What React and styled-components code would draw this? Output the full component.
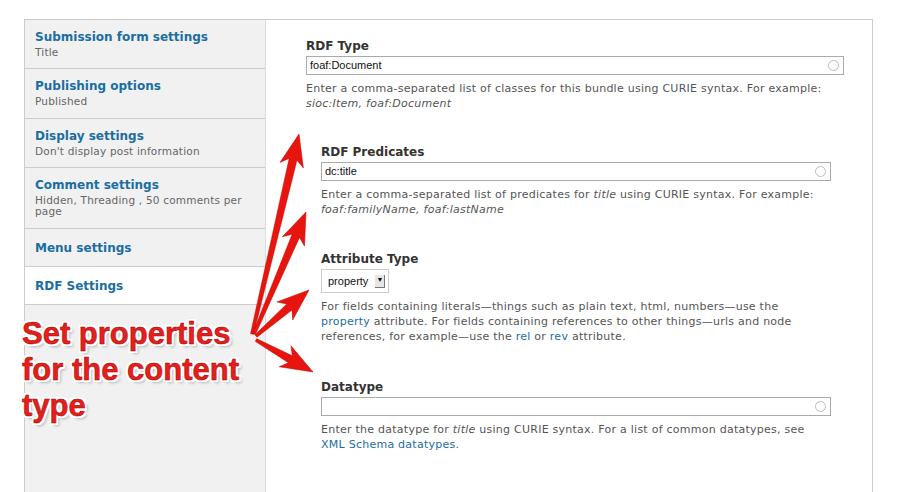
import React from 'react'
import styled, { createGlobalStyle } from 'styled-components'

const Global = createGlobalStyle`
  html, body { margin: 0; background: #fff; }
  body { font-family: "DejaVu Sans", Verdana, sans-serif; color: #333; }
`

const Page = styled.div`
  position: relative;
  width: 902px;
  height: 492px;
  overflow: hidden;
  padding: 19px 0 0 24px;
  box-sizing: border-box;
`

const Frame = styled.div`
  display: flex;
  width: 849px;
  height: 490px;
  border: 1px solid #ccc;
  box-sizing: border-box;
`

const Sidebar = styled.div`
  width: 240px;
  background: #f1f1f1;
  border-right: 1px solid #ddd;
`

const Tab = styled.div`
  height: ${p => p.h}px;
  box-sizing: border-box;
  padding: 10px 10px 0 10px;
  border-bottom: 1px solid #ccc;
  background: ${p => (p.active ? '#fff' : 'transparent')};
  ${p => p.center && 'display:flex;align-items:center;padding-top:0;'}
`

const TabTitle = styled.div`
  font-weight: bold;
  font-size: 12px;
  color: #1a6ea3;
`

const TabSub = styled.div`
  font-size: 10.5px;
  color: #666;
  line-height: 11px;
  margin-top: 3px;
  letter-spacing: 0.2px;
`

const Main = styled.div`
  flex: 1;
  padding: 19px 28px 0 40px;
`

const Field = styled.div`
  margin-left: ${p => p.indent || 0}px;
  margin-right: ${p => (p.indent ? 13 : 0)}px;
  margin-bottom: ${p => p.mb}px;
`

const Label = styled.div`
  font-weight: bold;
  font-size: 12px;
  color: #333;
  margin-bottom: 3px;
`

const Input = styled.div`
  position: relative;
  height: 19px;
  border: 1px solid #aaa;
  box-sizing: border-box;
  font-family: "Liberation Sans", Arial, sans-serif;
  font-size: 11px;
  line-height: 17px;
  padding-left: 3px;
  color: #111;
  &::after {
    content: '';
    position: absolute;
    right: 4px;
    top: 3px;
    width: 9px;
    height: 9px;
    border: 1px solid #bbb;
    border-radius: 50%;
  }
`

const Select = styled.div`
  display: inline-flex;
  align-items: center;
  gap: 7px;
  height: 22px;
  border: 1px solid #ccc;
  padding: 0 3px 0 6px;
  font-family: "Liberation Sans", Arial, sans-serif;
  font-size: 11px;
  color: #111;
`

const SelBtn = styled.span`
  width: 9px;
  height: 12px;
  background: #e6e6e6;
  border-right: 1px solid #777;
  border-bottom: 1px solid #777;
  font-size: 7px;
  line-height: 10px;
  text-align: center;
`

const Desc = styled.div`
  margin-top: 6px;
  font-size: 11px;
  letter-spacing: 0.25px;
  line-height: 15px;
  color: #555;
  a { color: #1a6ea3; text-decoration: none; }
`

const Callout = styled.div`
  position: absolute;
  left: 22px;
  top: 316px;
  font-family: "Liberation Sans", Arial, sans-serif;
  font-weight: bold;
  font-size: 31px;
  line-height: 36px;
  color: #e3201b;
  -webkit-text-stroke: 0.5px #a00;
  text-shadow: 2px 2px 0 #fff, -2px -2px 0 #fff, 2px -2px 0 #fff, -2px 2px 0 #fff, 3px 3px 3px rgba(0,0,0,0.25);
`

const Overlay = styled.svg`
  position: absolute;
  left: 0;
  top: 0;
`

const Arrow = ({ x1, y1, x2, y2 }) => {
  const dx = x2 - x1, dy = y2 - y1
  const len = Math.hypot(dx, dy)
  const ux = dx / len, uy = dy / len
  const px = -uy, py = ux
  const hl = 26, hw = 12
  const bx = x2 - ux * hl, by = y2 - uy * hl
  const pts = [
    [x1 + px * 1.5, y1 + py * 1.5],
    [bx + px * 4, by + py * 4],
    [bx - ux * 6 + px * hw, by - uy * 6 + py * hw],
    [x2, y2],
    [bx - ux * 6 - px * hw, by - uy * 6 - py * hw],
    [bx - px * 4, by - py * 4],
    [x1 - px * 1.5, y1 - py * 1.5],
  ].map(p => p.join(',')).join(' ')
  return <polygon points={pts} fill="#e8150f" stroke="#b00" strokeWidth="0.5" />
}

export default function App() {
  return (
    <Page>
      <Global />
      <Frame>
        <Sidebar>
          <Tab h={49}><TabTitle>Submission form settings</TabTitle><TabSub>Title</TabSub></Tab>
          <Tab h={50}><TabTitle>Publishing options</TabTitle><TabSub>Published</TabSub></Tab>
          <Tab h={49}><TabTitle>Display settings</TabTitle><TabSub>Don't display post information</TabSub></Tab>
          <Tab h={61}><TabTitle>Comment settings</TabTitle><TabSub>Hidden, Threading , 50 comments per page</TabSub></Tab>
          <Tab h={38} center><TabTitle>Menu settings</TabTitle></Tab>
          <Tab h={38} active center><TabTitle>RDF Settings</TabTitle></Tab>
        </Sidebar>
        <Main>
          <Field mb={34}>
            <Label>RDF Type</Label>
            <Input>foaf:Document</Input>
            <Desc>Enter a comma-separated list of classes for this bundle using CURIE syntax. For example: <i>sioc:Item, foaf:Document</i></Desc>
          </Field>
          <Field indent={15} mb={35}>
            <Label>RDF Predicates</Label>
            <Input>dc:title</Input>
            <Desc>Enter a comma-separated list of predicates for <i>title</i> using CURIE syntax. For example: <i>foaf:familyName, foaf:lastName</i></Desc>
          </Field>
          <Field indent={15} mb={36}>
            <Label>Attribute Type</Label>
            <Select>property<SelBtn>▼</SelBtn></Select>
            <Desc>For fields containing literals—things such as plain text, html, numbers—use the <a>property</a> attribute. For fields containing references to other things—urls and node references, for example—use the <a>rel</a> or <a>rev</a> attribute.</Desc>
          </Field>
          <Field indent={15} mb={0}>
            <Label>Datatype</Label>
            <Input />
            <Desc>Enter the datatype for <i>title</i> using CURIE syntax. For a list of common datatypes, see <a>XML Schema datatypes</a>.</Desc>
          </Field>
        </Main>
      </Frame>
      <Overlay width="902" height="492">
        <Arrow x1={252} y1={334} x2={299} y2={134} />
        <Arrow x1={254} y1={334} x2={306} y2={212} />
        <Arrow x1={256} y1={336} x2={309} y2={290} />
        <Arrow x1={256} y1={340} x2={313} y2={372} />
      </Overlay>
      <Callout>Set properties<br />for the content<br />type</Callout>
    </Page>
  )
}
